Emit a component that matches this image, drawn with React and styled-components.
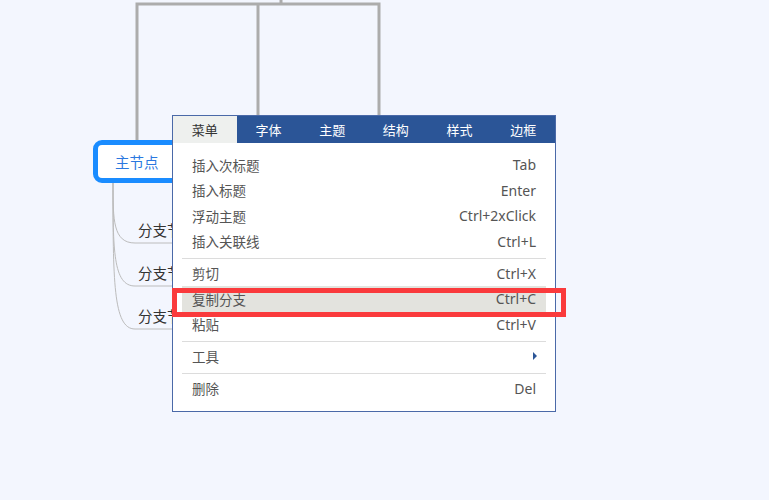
import React from 'react';
import styled, { createGlobalStyle } from 'styled-components';

const GlobalStyle = createGlobalStyle`
  html, body {
    margin: 0;
    padding: 0;
    background: #f3f6fe;
  }
  body {
    font-family: "Noto Sans", "Noto Sans CJK SC", sans-serif;
  }
`;

const Canvas = styled.div`
  position: relative;
  width: 769px;
  height: 500px;
  overflow: hidden;
  background: #f3f6fe;
`;

const Lines = styled.svg`
  position: absolute;
  left: 0;
  top: 0;
`;

const MainNode = styled.div`
  position: absolute;
  left: 93px;
  top: 140px;
  width: 100px;
  height: 43px;
  box-sizing: border-box;
  border: 5px solid #1a8cff;
  border-radius: 9px;
  background: #fff;
  display: flex;
  align-items: center;
  padding-left: 17px;
  color: #2a78e0;
  font-size: 14.5px;
`;

/* branch labels run under the menu, so clip them where the menu starts */
const BranchList = styled.div`
  position: absolute;
  left: 138px;
  top: 220px;
  width: 34px;
  overflow: hidden;
  display: flex;
  flex-direction: column;
  gap: 23px;
`;

const BranchNode = styled.div`
  color: #333;
  font-size: 14.5px;
  line-height: 20px;
  white-space: nowrap;
`;

const Menu = styled.div`
  position: absolute;
  left: 172px;
  top: 115px;
  width: 384px;
  box-sizing: border-box;
  border: 1px solid #4a69a8;
  background: #fff;
  font-size: 13.5px;
`;

const Tabs = styled.div`
  display: grid;
  grid-template-columns: repeat(6, 1fr);
  height: 27px;
  background: #2b5597;
  font-size: 13px;
`;

const Tab = styled.div`
  display: flex;
  align-items: center;
  justify-content: center;
  padding-bottom: 1px;
  color: ${(p) => (p.$active ? '#333' : '#fff')};
  background: ${(p) => (p.$active ? '#eef0ee' : 'transparent')};
`;

const Body = styled.div`
  padding: 9px 0 10px;
`;

const Item = styled.div`
  display: flex;
  justify-content: space-between;
  align-items: center;
  height: 25.5px;
  margin: 0 9px;
  padding: 0 10px;
  color: #555;
  background: ${(p) => (p.$hover ? '#e3e3de' : 'transparent')};
`;

const Key = styled.span`
  font-size: 14px;
`;

const Sep = styled.div`
  height: 1px;
  margin: 3.5px 9px 2px;
  background: #dcdcdc;
`;

const Arrow = styled.span`
  width: 0;
  height: 0;
  margin-right: -1px;
  border-top: 4px solid transparent;
  border-bottom: 4px solid transparent;
  border-left: 4px solid #2b5597;
`;

const Marker = styled.div`
  position: absolute;
  left: 172px;
  top: 288px;
  width: 394px;
  height: 29px;
  box-sizing: border-box;
  border: 5px solid #fa3a3c;
`;

const tabs = ['菜单', '字体', '主题', '结构', '样式', '边框'];

const groups = [
  [
    ['插入次标题', 'Tab'],
    ['插入标题', 'Enter'],
    ['浮动主题', 'Ctrl+2xClick'],
    ['插入关联线', 'Ctrl+L'],
  ],
  [
    ['剪切', 'Ctrl+X'],
    ['复制分支', 'Ctrl+C', true],
    ['粘贴', 'Ctrl+V'],
  ],
  [['工具', 'arrow']],
  [['删除', 'Del']],
];

export default function App() {
  return (
    <Canvas>
      <GlobalStyle />
      <Lines width="769" height="500">
        <g stroke="#acacac" strokeWidth="3" fill="none">
          <line x1="281" y1="0" x2="281" y2="4" />
          <polyline points="137,142 137,4 379,4 379,116" />
          <line x1="258" y1="4" x2="258" y2="116" />
        </g>
        <g stroke="#bcbcbc" strokeWidth="1" fill="none">
          <path d="M113,183 C113,220 113,243 135,243 L175,243" />
          <path d="M113,183 C113,250 113,286 135,286 L175,286" />
          <path d="M113,183 C113,280 113,329 135,329 L175,329" />
        </g>
      </Lines>
      <MainNode>主节点</MainNode>
      <BranchList>
        <BranchNode>分支节点</BranchNode>
        <BranchNode>分支节点</BranchNode>
        <BranchNode>分支节点</BranchNode>
      </BranchList>
      <Menu>
        <Tabs>
          {tabs.map((t, i) => (
            <Tab key={t} $active={i === 0}>{t}</Tab>
          ))}
        </Tabs>
        <Body>
          {groups.map((g, gi) => (
            <React.Fragment key={gi}>
              {gi > 0 && <Sep />}
              {g.map(([label, key, hover]) => (
                <Item key={label} $hover={hover}>
                  <span>{label}</span>
                  {key === 'arrow' ? <Arrow /> : <Key>{key}</Key>}
                </Item>
              ))}
            </React.Fragment>
          ))}
        </Body>
      </Menu>
      <Marker />
    </Canvas>
  );
}
